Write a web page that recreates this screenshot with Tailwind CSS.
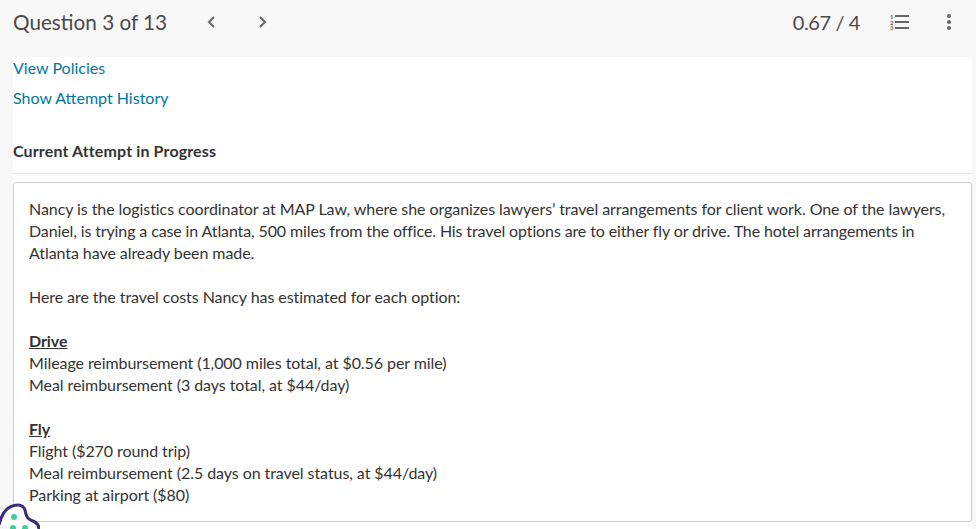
<!DOCTYPE html>
<html lang="en">
<head>
  <meta charset="UTF-8" />
  <title>Question 3 of 13</title>
  <script src="https://cdn.jsdelivr.net/npm/@tailwindcss/browser@4"></script>
</head>
<body class="h-[529px] overflow-hidden bg-[#f8f8f8] font-['Lato',sans-serif] text-[#333] relative">

  <!-- Top bar -->
  <div class="flex items-start h-[57px] pl-[13px] pr-[25px] pt-[9px] text-[#4a4a4a]">
    <span class="w-[154px] text-[20.7px] leading-[26px] whitespace-nowrap">Question 3 of 13</span>
    <svg class="ml-[39px] mt-[6px]" width="10" height="14" viewBox="0 0 10 14" fill="none" stroke="#666" stroke-width="2"><path d="M8 2 3 7l5 5"/></svg>
    <svg class="ml-[42px] mt-[6px]" width="10" height="14" viewBox="0 0 10 14" fill="none" stroke="#666" stroke-width="2"><path d="M2 2l5 5-5 5"/></svg>
    <span class="ml-auto text-[20px] leading-[26px] tracking-[-0.4px]">0.67 / 4</span>
    <svg class="ml-[30px] mt-[5px]" width="20" height="16" viewBox="0 0 20 16" fill="none" stroke="#666" stroke-width="1.800">
      <path d="M5 2h14M5 8h14M5 14h14"/>
      <text x="0" y="4.500" font-size="6" font-weight="700" fill="#666" stroke="none">1</text>
      <text x="0" y="10.500" font-size="6" font-weight="700" fill="#666" stroke="none">2</text>
      <text x="0" y="16" font-size="6" font-weight="700" fill="#666" stroke="none">3</text>
    </svg>
    <svg class="ml-[37px] mt-[5px]" width="4" height="16" viewBox="0 0 4 16" fill="#666"><circle cx="2" cy="2" r="2"/><circle cx="2" cy="8" r="2"/><circle cx="2" cy="14" r="2"/></svg>
  </div>

  <!-- Main content -->
  <div class="ml-[13px] w-[959px] h-[472px] bg-white">
    <div class="text-[16px] text-[#00779e]">
      <div class="h-[30px] leading-[22px]">View Policies</div>
      <div class="h-[30px] leading-[22px]">Show Attempt History</div>
    </div>

    <div class="mt-[23px] pb-[11px] border-b border-[#e6e6e6] text-[16px] font-bold leading-[22px] tracking-[0.13px] text-[#333]">Current Attempt in Progress</div>

    <!-- Question card -->
    <div class="mt-[8px] h-[340px] border border-[#ccc] rounded-[3px] px-[15px] pt-[15px] text-[16px] leading-[22px] tracking-[-0.07px]">
      <p>Nancy is the logistics coordinator at MAP Law, where she organizes lawyers’ travel arrangements for client work. One of the lawyers, <span class="tracking-[-0.12px]">Daniel, is trying a case in Atlanta, 500 miles from the office. His travel options are to either fly or drive. The hotel arrangements in</span> Atlanta have already been made.</p>
      <p class="mt-[22px]">Here are the travel costs Nancy has estimated for each option:</p>
      <p class="mt-[22px] font-bold underline">Drive</p>
      <p>Mileage reimbursement (1,000 miles total, at $0.56 per mile)</p>
      <p>Meal reimbursement (3 days total, at $44/day)</p>
      <p class="mt-[22px] font-bold underline">Fly</p>
      <p>Flight ($270 round trip)</p>
      <p>Meal reimbursement (2.5 days on travel status, at $44/day)</p>
      <p>Parking at airport ($80)</p>
    </div>
  </div>

  <!-- Cookie badge -->
  <svg class="absolute left-0 bottom-0" width="40" height="29" viewBox="0 0 40 29" fill="#fff" stroke="#3b2a7c" stroke-width="3"><path d="M-1 25C2 12 8 5 18 5c4 0 6 2 7 5 1 4 1 7 4 9 2 2 7 2 9 6 1 2 1 4 1 6"/><circle cx="14" cy="17" r="3" fill="#3ecf9e" stroke="none"/><circle cx="13" cy="28" r="3" fill="#3ecf9e" stroke="none"/><circle cx="25" cy="28" r="3" fill="#3ecf9e" stroke="none"/></svg>
</body>
</html>
